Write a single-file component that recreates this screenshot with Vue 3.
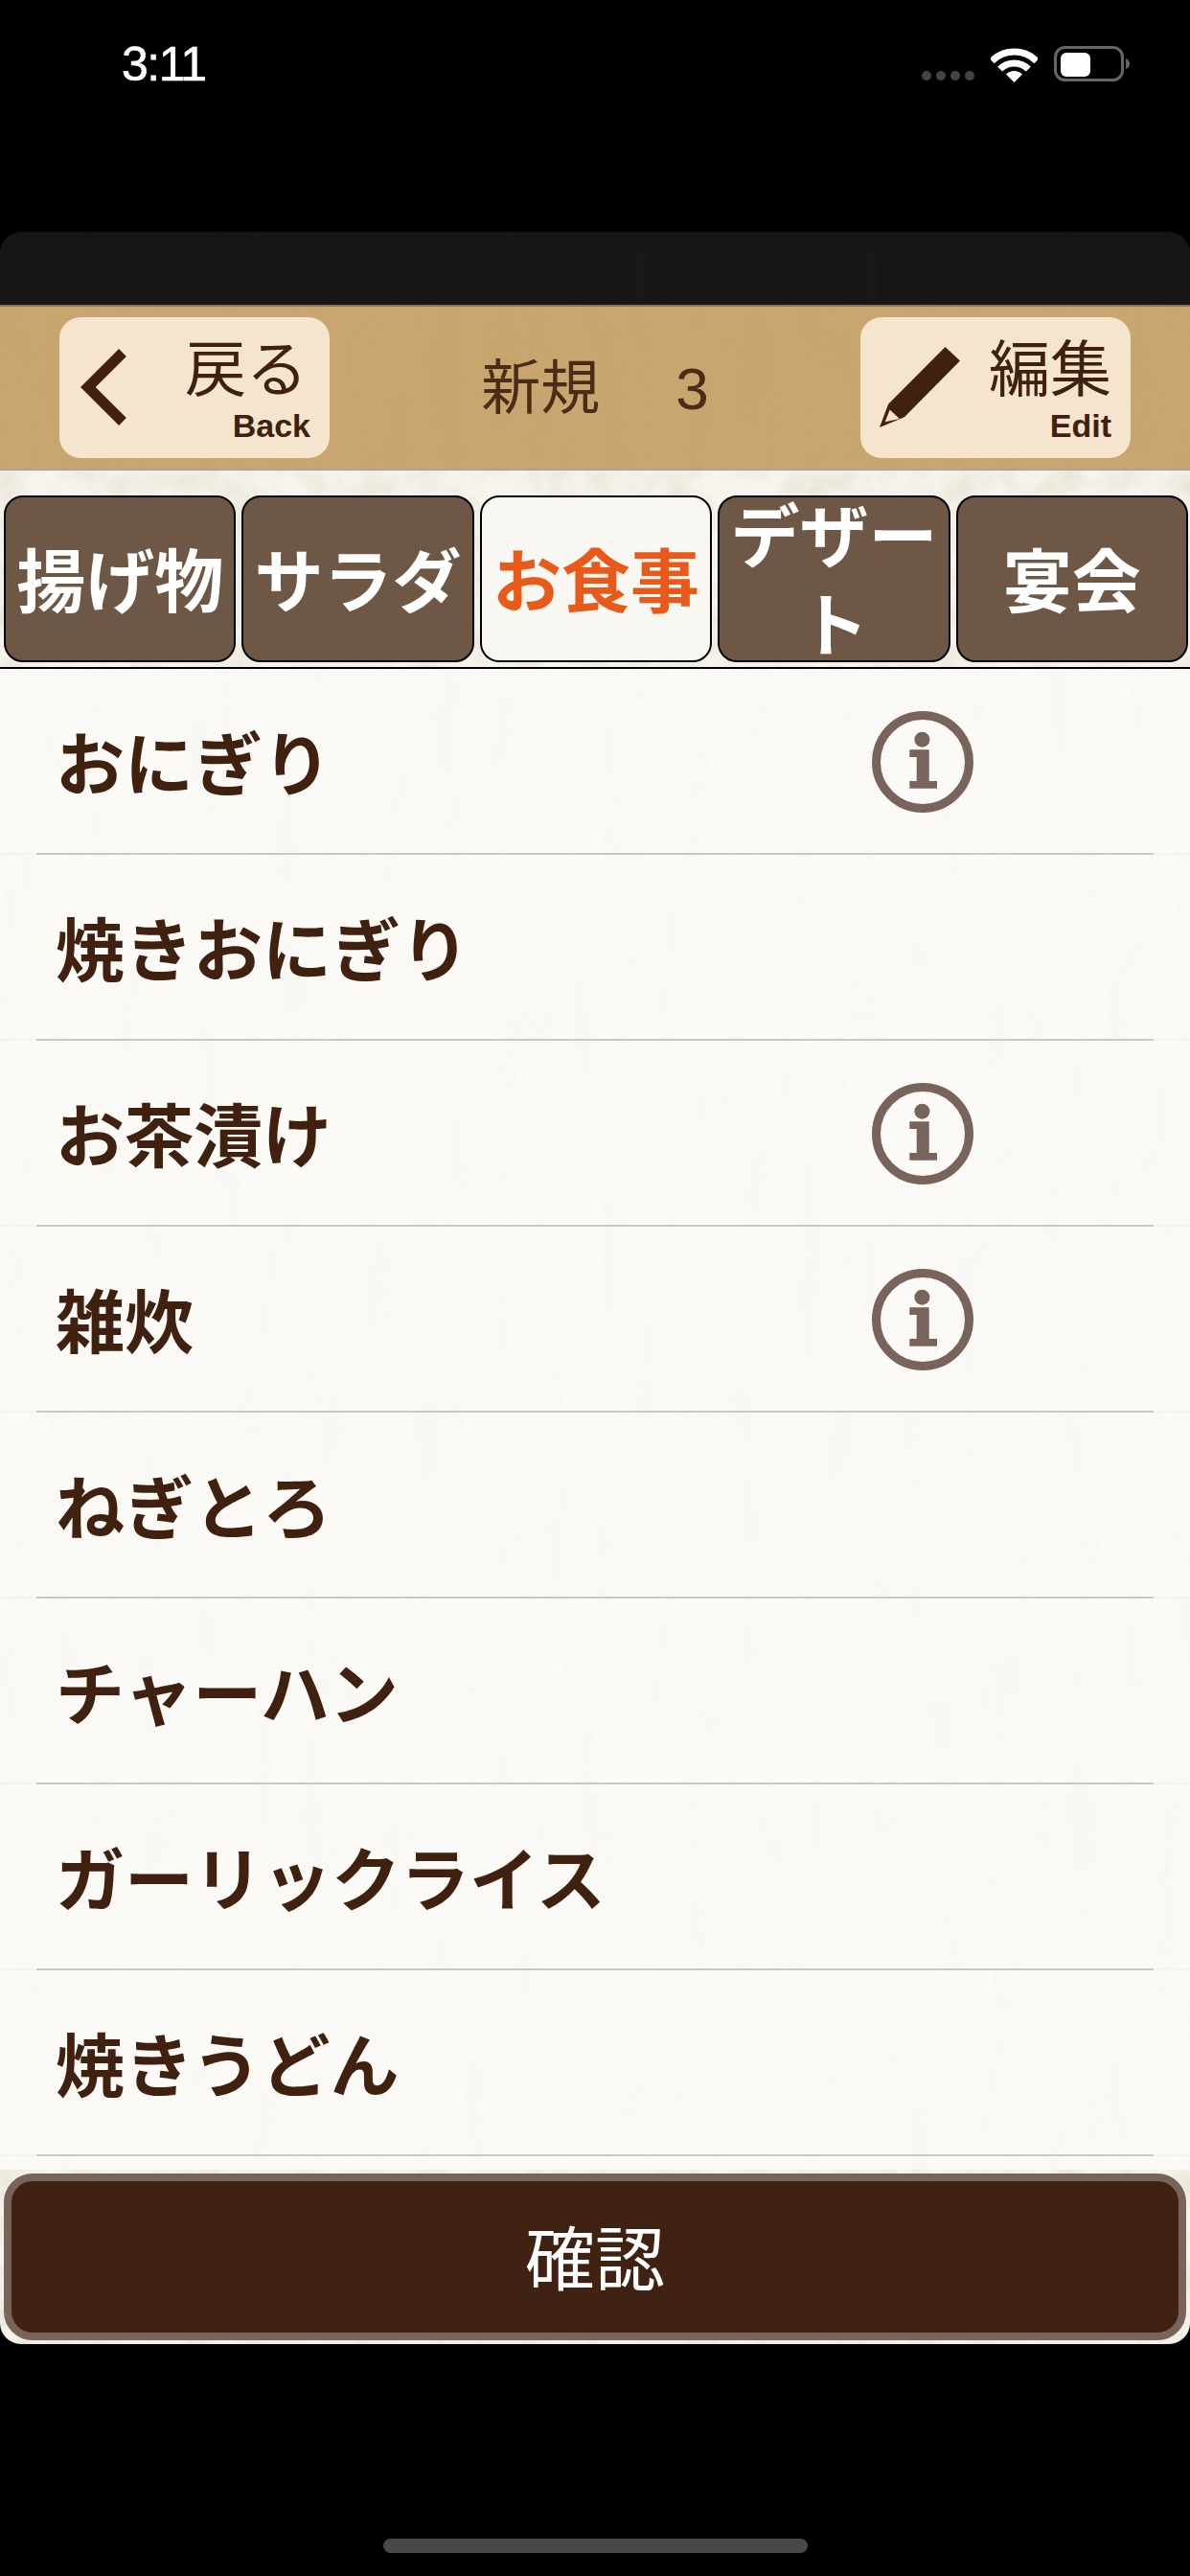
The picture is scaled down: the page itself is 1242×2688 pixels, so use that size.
<script setup>
const tabs = [
  { label: '揚げ物' },
  { label: 'サラダ' },
  { label: 'お食事', active: true },
  { label: 'デザート' },
  { label: '宴会' },
]
const rows = [
  { name: 'おにぎり', info: true },
  { name: '焼きおにぎり' },
  { name: 'お茶漬け', info: true },
  { name: '雑炊', info: true },
  { name: 'ねぎとろ' },
  { name: 'チャーハン' },
  { name: 'ガーリックライス' },
  { name: '焼きうどん' },
]
</script>

<template>
  <div class="screen">
    <svg class="defs" aria-hidden="true">
      <filter id="grain-dark" x="0" y="0" width="100%" height="100%">
        <feTurbulence type="fractalNoise" baseFrequency="0.035 0.007" numOctaves="4" seed="7" />
        <feColorMatrix type="matrix" values="0 0 0 0 0.42  0 0 0 0 0.36  0 0 0 0 0.25  1.6 0 0 0 -0.62" />
      </filter>
      <filter id="grain-band" x="0" y="0" width="100%" height="100%">
        <feTurbulence type="fractalNoise" baseFrequency="0.03 0.03" numOctaves="4" seed="11" />
        <feColorMatrix type="matrix" values="0 0 0 0 0.62  0 0 0 0 0.58  0 0 0 0 0.46  2 0 0 0 -0.68" />
      </filter>
      <filter id="grain-light" x="0" y="0" width="100%" height="100%">
        <feTurbulence type="fractalNoise" baseFrequency="0.05 0.004" numOctaves="3" seed="3" />
        <feColorMatrix type="matrix" values="0 0 0 0 1  0 0 0 0 1  0 0 0 0 1  1.6 0 0 0 -0.62" />
      </filter>
    </svg>

    <header class="status">
      <span class="time">3:11</span>
      <div class="status-icons">
        <div class="dots"><i></i><i></i><i></i><i></i></div>
        <svg class="wifi" width="49" height="36" viewBox="0 0 49 36">
          <path d="M1.17 13.67A33 33 0 0 1 47.83 13.67" fill="none" stroke="#fff" stroke-width="7" />
          <path d="M9.65 22.15A21 21 0 0 1 39.35 22.15" fill="none" stroke="#fff" stroke-width="7" />
          <path d="M24.5 36L16 27.5A12 12 0 0 1 33 27.5Z" fill="#fff" />
        </svg>
        <svg class="battery" width="80" height="38" viewBox="0 0 80 38">
          <rect x="1.5" y="1.5" width="70" height="34" rx="10" fill="none" stroke="#666" stroke-width="3" />
          <rect x="7" y="7" width="31" height="25" rx="6" fill="#fff" />
          <path d="M75 13C78 14 79 16.500 79 18.500S78 23 75 24Z" fill="#666" />
        </svg>
      </div>
    </header>

    <main class="card">
      <div class="cap">
        <svg class="grain light"><rect width="100%" height="100%" filter="url(#grain-light)" /></svg>
      </div>

      <nav class="topbar">
        <svg class="grain soft"><rect width="100%" height="100%" filter="url(#grain-dark)" /></svg>
        <button class="nav-btn">
          <svg class="chevron" width="50" height="86" viewBox="0 0 50 86">
            <path d="M44 7L7.800 43L44 79" fill="none" stroke="#40210f" stroke-width="11" />
          </svg>
          <span class="nav-text back-text">
            <span class="nav-ja">戻る</span>
            <span class="nav-en">Back</span>
          </span>
        </button>
        <h1 class="title">新規　 3</h1>
        <button class="nav-btn">
          <svg class="pencil" width="84" height="84" viewBox="118 127 250 250">
            <path d="M118 377L145 305L322 127L368 170L195 345Z" fill="#40210f" />
            <path d="M150 322L180 350L135 360Z" fill="#f5e4ce" />
          </svg>
          <span class="nav-text">
            <span class="nav-ja">編集</span>
            <span class="nav-en">Edit</span>
          </span>
        </button>
      </nav>

      <section class="tabband">
        <svg class="grain strong"><rect width="100%" height="100%" filter="url(#grain-band)" /></svg>
        <div class="tabs">
          <button v-for="tab in tabs" :key="tab.label" class="tab" :class="{ active: tab.active }">
            <span>{{ tab.label }}</span>
          </button>
        </div>
      </section>

      <section class="list">
        <svg class="grain faint"><rect width="100%" height="100%" filter="url(#grain-dark)" /></svg>
        <div v-for="row in rows" :key="row.name" class="row">
          <span class="row-name">{{ row.name }}</span>
          <svg v-if="row.info" class="info" width="106" height="106" viewBox="0 0 106 106">
            <circle cx="53" cy="53" r="48.500" fill="none" stroke="#78645a" stroke-width="9" />
            <circle cx="52.400" cy="29.700" r="8" fill="#78645a" />
            <path d="M39.300 40.300H59.700V73H68V80.700H39.300V73H46.700V48H39.300Z" fill="#78645a" />
          </svg>
        </div>
      </section>

      <footer class="footer">
        <svg class="grain strong"><rect width="100%" height="100%" filter="url(#grain-band)" /></svg>
        <button class="confirm"><span>確認</span></button>
      </footer>
    </main>

    <div class="home-wrap"><div class="home"></div></div>
  </div>
</template>

<style scoped>
.screen {
  width: 1242px;
  height: 2688px;
  background: #000;
  display: flex;
  flex-direction: column;
  overflow: hidden;
  font-family: "Noto Sans CJK JP", "Noto Sans", sans-serif;
  color: #40210f;
}
.defs {
  position: absolute;
  width: 0;
  height: 0;
}
.status {
  height: 242px;
  flex: none;
  display: flex;
  justify-content: space-between;
  align-items: flex-start;
  padding: 38px 62px 0 127px;
  box-sizing: border-box;
}
.time {
  font-family: "Liberation Sans", Arial, sans-serif;
  font-weight: 400;
  font-size: 50px;
  line-height: 58px;
  letter-spacing: -1.500px;
  color: #fff;
  -webkit-text-stroke: 0.6px #fff;
}
.status-icons {
  display: flex;
  align-items: flex-end;
  padding-top: 11px;
}
.dots {
  display: flex;
  gap: 5px;
  margin-right: 17px;
  padding-bottom: 2px;
}
.dots i {
  width: 10px;
  height: 10px;
  border-radius: 50%;
  background: #444;
}
.wifi {
  margin-right: 17px;
}
.battery {
  margin-top: -1px;
}
.card {
  width: 1242px;
  height: 2204px;
  flex: none;
  display: flex;
  flex-direction: column;
  border-radius: 22px;
  overflow: hidden;
}
.grain {
  position: absolute;
  left: 0;
  top: 0;
  width: 100%;
  height: 100%;
  pointer-events: none;
}
.grain.light { opacity: 0.012; }
.grain.soft { opacity: 0.05; }
.grain.strong { opacity: 0.3; }
.grain.faint { opacity: 0.035; }
.cap {
  position: relative;
  height: 76px;
  flex: none;
  background: #161614;
  border-bottom: 2px solid #8d7753;
  box-sizing: content-box;
}
.topbar {
  position: relative;
  height: 171px;
  flex: none;
  box-sizing: border-box;
  background: #c9a56f;
  border-bottom: 2px solid #a9a49b;
  display: flex;
  justify-content: space-between;
  align-items: center;
  padding: 0 62px;
}
.nav-btn {
  position: relative;
  width: 282px;
  height: 147px;
  margin-top: -1px;
  padding: 0;
  border: 0;
  border-radius: 22px;
  background: #f5e4ce;
  color: #40210f;
  display: flex;
  align-items: center;
  font-family: inherit;
}
.chevron {
  flex: none;
  margin-left: 22px;
}
.pencil {
  flex: none;
  margin-left: 20px;
}
.nav-text {
  flex: 1;
  display: flex;
  flex-direction: column;
  align-items: flex-end;
  padding-right: 20px;
  padding-top: 6px;
}
.nav-ja {
  font-size: 64px;
  line-height: 64px;
  margin-top: -6px;
}
.back-text .nav-ja {
  margin-right: 3px;
}
.nav-en {
  font-family: "Liberation Sans", Arial, sans-serif;
  font-weight: 700;
  font-size: 34px;
  line-height: 34px;
  margin-top: 15px;
}
.title {
  position: relative;
  margin: 2px 0 0;
  font-family: "Liberation Sans", "Noto Sans CJK JP", sans-serif;
  font-size: 62px;
  line-height: 80px;
  font-weight: 400;
  white-space: pre;
  color: #4a2c17;
}
.tabband {
  position: relative;
  height: 207px;
  flex: none;
  box-sizing: border-box;
  padding: 26px 2px 5px 4px;
  background: #f7f4ec;
  border-bottom: 2px solid #000;
}
.tabs {
  position: relative;
  height: 174px;
  display: grid;
  grid-template-columns: repeat(5, 1fr);
  gap: 6px;
}
.tab {
  height: 174px;
  padding: 0 0 6px;
  border: 2px solid #000;
  border-radius: 20px;
  background: #6f5746;
  color: #fff;
  font-family: inherit;
  font-weight: 700;
  font-size: 72px;
  line-height: 93px;
  display: flex;
  align-items: center;
  justify-content: center;
  text-align: center;
}
.tab.active {
  background: #f9f7f2;
  color: #e9591a;
}
.list {
  position: relative;
  flex: 1;
  min-height: 0;
  overflow: hidden;
  background: #fbfaf7;
}
.row {
  position: relative;
  height: 194px;
  box-sizing: border-box;
  display: flex;
  justify-content: space-between;
  align-items: center;
  padding: 0 226px 0 58px;
  border-bottom: 2px solid #f5f4f1;
}
.row:first-child {
  height: 191px;
}
.row::after {
  content: "";
  position: absolute;
  left: 38px;
  right: 38px;
  bottom: -2px;
  height: 2px;
  background: #cbc9c8;
}
.row-name {
  font-weight: 700;
  font-size: 72px;
  line-height: 90px;
  margin-top: -2px;
}
.info {
  margin-top: 2px;
}
.footer {
  position: relative;
  height: 182px;
  flex: none;
  box-sizing: border-box;
  padding: 4px;
  background: #f7f4ec;
}
.confirm {
  position: relative;
  width: 100%;
  height: 174px;
  box-sizing: border-box;
  border: 8px solid #78645a;
  border-radius: 30px;
  background: #3f2212;
  color: #fff;
  font-family: inherit;
  font-size: 73px;
  line-height: 90px;
  padding: 0 0 6px;
}
.home-wrap {
  flex: 1;
  display: flex;
  justify-content: center;
  padding-top: 203px;
}
.home {
  width: 443px;
  height: 15px;
  border-radius: 8px;
  background: #484848;
}
</style>
